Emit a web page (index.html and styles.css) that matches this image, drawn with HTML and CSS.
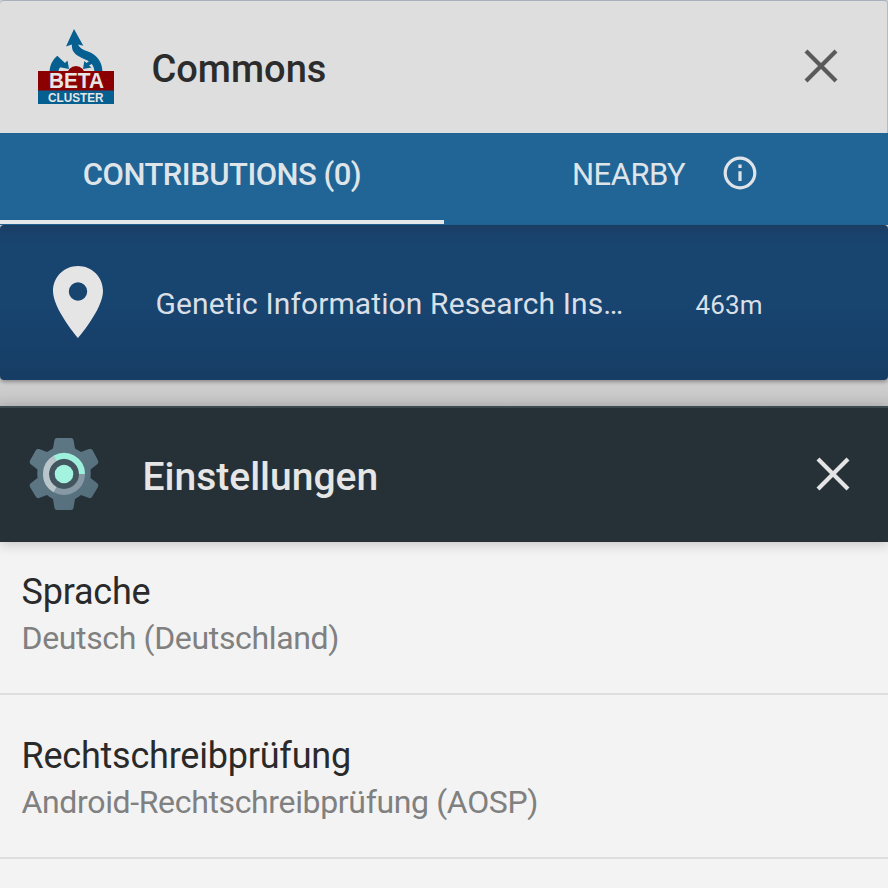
FILE: index.html
```
<!DOCTYPE html>
<html lang="de">
<head>
<meta charset="utf-8">
<title>Commons</title>
<link rel="stylesheet" href="styles.css">
</head>
<body>
<section class="task commons">
  <header class="task-header">
    <svg class="logo" viewBox="0 0 76 76">
      <g fill="#065f91">
        <path d="M36 0 45.300 16.700 40 15.500C41.500 19 45 21 50 22.500C60 26 64.300 34 64.500 43H56.500C56 37 54 34 49.500 31.500C40 27 33.500 25 33.800 15.500L28 17.500Z"/>
        <path d="M19.300 26.700 27 34 29.500 31.500 31 40 22 38.300 24 36.500C21.500 38.500 20.500 40 20.500 43H11.500C12 36 14 31.500 19.300 26.700Z"/>
        <path d="M45 40 46.300 32 48.500 34 52 31.500 54.500 34.500 51 36.500 53.500 38.600Z"/>
        <path d="M0 61H76V75H0Z"/>
      </g>
      <circle cx="38" cy="46" r="9" fill="#8b0000"/>
      <path d="M0 42H76V61.500H0Z" fill="#8b0000"/>
      <g class="logo-text" fill="#e6e6e6">
        <text x="38.500" y="59.300" font-size="22.500" textLength="55" lengthAdjust="spacingAndGlyphs">BETA</text>
        <text x="37.800" y="73" font-size="12.800" textLength="55.500" lengthAdjust="spacingAndGlyphs">CLUSTER</text>
      </g>
    </svg>
    <h1 class="task-title">Commons</h1>
    <svg class="close" viewBox="0 0 34 34"><path d="M2 2 32 32M32 2 2 32"/></svg>
  </header>
  <nav class="tabs">
    <div class="tab active"><span>CONTRIBUTIONS (0)</span></div>
    <div class="tab">
      <span>NEARBY</span>
      <svg class="info" viewBox="0 0 34 34"><circle cx="17" cy="17" r="14.800"/><path d="M17 15.300V25M17 8.500V12"/></svg>
    </div>
  </nav>
  <div class="place">
    <svg class="pin" viewBox="0 0 50 72"><path fill-rule="evenodd" d="M25 0C11 0 0 11 0 25C0 43 25 72 25 72S50 43 50 25C50 11 39 0 25 0ZM25 16.300A9.200 9.200 0 1 1 25 34.700A9.200 9.200 0 1 1 25 16.300Z"/></svg>
    <span class="place-name">Genetic Information Research Ins…</span>
    <span class="place-distance">463m</span>
  </div>
</section>
<section class="task settings">
  <header class="task-header">
    <svg class="gear" viewBox="0 0 70 74">
      <defs><linearGradient id="metal" x1="0" y1="0" x2="1" y2="1"><stop offset="0" stop-color="#617a88"/><stop offset="1" stop-color="#536d7b"/></linearGradient></defs>
      <path fill="url(#metal)" d="M28 1H42Q44 1 44.500 3L46 11.500Q49 13 52 15L60 12Q62.500 11.500 63.500 13L69 23.500Q70 25.500 68.500 27L61.500 32.500Q62 37 61.500 41L68.500 46.500Q70 48 69 50L63 60Q62 61.500 60 61L52 58Q49 60.500 46 62L44.500 71Q44 73 42 73H28Q26 73 25.500 71L24 62Q21 60.500 18 58L10 61Q8 61.500 7 60L1 50Q0 48 1.500 46.500L8.500 41Q8 37 8.500 32.500L1.500 27Q0 25.500 1 23.500L7 13Q8 11.500 10 12L18 15Q21 13 24 11.500L25.500 3Q26 1 28 1Z"/>
      <circle cx="35" cy="37" r="17" fill="#43565f"/>
      <g fill="none" stroke-width="6">
        <circle cx="35" cy="37" r="18" stroke="#8799a4"/>
        <path stroke="#b9c5cb" d="M26 52.600A18 18 0 0 1 26 21.400"/>
        <path stroke="#9cf0dc" d="M26 21.400A18 18 0 0 1 53 37"/>
      </g>
      <circle cx="35" cy="37" r="9.300" fill="#a4f3e1"/>
    </svg>
    <h1 class="task-title">Einstellungen</h1>
    <svg class="close" viewBox="0 0 34 34"><path d="M2 2 32 32M32 2 2 32"/></svg>
  </header>
  <ul class="prefs">
    <li class="pref"><div class="pref-title">Sprache</div><div class="pref-value">Deutsch (Deutschland)</div></li>
    <li class="pref"><div class="pref-title">Rechtschreibprüfung</div><div class="pref-value">Android-Rechtschreibprüfung (AOSP)</div></li>
  </ul>
</section>
</body>
</html>
```
FILE: styles.css
```
* { box-sizing: border-box; }
body {
  margin: 0;
  height: 888px;
  overflow: hidden;
  background: #f3f3f3;
  font-family: Roboto, "Liberation Sans", sans-serif;
}
svg { display: block; flex: none; }
.task-header { display: flex; align-items: center; }
.task-title { margin: 0; font-weight: 500; white-space: nowrap; }
.close { width: 34px; height: 34px; margin-left: auto; fill: none; stroke-width: 4.2; }

.commons { height: 406px; background: linear-gradient(#d2d2d2 380px, #c2c2c2); }
.commons .task-header {
  height: 133px;
  padding: 0 49px 2px 38px;
  background: #dedede;
  border-top: 1px solid #a7b2bd;
  border-right: 1px solid #b2bcc4;
  border-radius: 4px 4px 0 0;
}
.commons .task-title { margin-left: 37.5px; padding-top: 6px; font-size: 38px; color: #2c2c2c; }
.commons .close { stroke: #5a5a5a; }
.logo { width: 76px; height: 76px; margin-top: 2px; }
.logo-text { font-family: "Liberation Sans", sans-serif; font-weight: 700; text-anchor: middle; }

.tabs { display: flex; height: 92px; padding-bottom: 1px; background: #216597; }
.tab {
  flex: none;
  width: 50%;
  display: flex;
  justify-content: center;
  align-items: center;
  padding-bottom: 6px;
  border-bottom: 4px solid transparent;
  font-size: 31px;
  letter-spacing: -.5px;
  color: #dfe4e8;
  white-space: nowrap;
}
.tab span { padding-top: 2px; }
.tab.active { border-color: #e4e6e8; font-weight: 500; }
.tab:not(.active) { justify-content: flex-start; padding-left: 128px; }
.info { width: 34px; height: 34px; margin: -1px 0 0 37.5px; fill: none; stroke: #dfe4e8; stroke-width: 3.2; }

.place {
  display: flex;
  align-items: center;
  height: 155px;
  padding: 0 0 2px 53px;
  border-radius: 4px;
  background: linear-gradient(#1b3c60, #19416b 8px, #184470 20px, #184470 80px, #163d64);
  box-shadow: 0 2px 4px rgba(0, 0, 0, .35);
  color: #d9dfe6;
  white-space: nowrap;
}
.pin { width: 50px; height: 72px; fill: #e5e5e5; }
.place-name { width: 540px; margin-left: 52.5px; padding-top: 3px; font-size: 30px; letter-spacing: .11px; }
.place-distance { padding-top: 6px; font-size: 26px; letter-spacing: .15px; }

.settings .task-header {
  position: relative;
  height: 136px;
  padding: 0 38px 2px 29px;
  background: #263137;
  border-top: 2px solid #3d4a50;
  box-shadow: 0 2px 12px rgba(0, 0, 0, .2);
}
.gear { width: 70px; height: 74px; }
.settings .task-title { margin-left: 43.5px; padding-top: 5px; font-size: 39px; color: #e6e6e6; }
.settings .close { stroke: #e4e4e4; }

.prefs { margin: 0; padding: 0; list-style: none; }
.pref { height: 164px; padding: 38px 21.5px 0; border-bottom: 2px solid #dedede; line-height: 46px; white-space: nowrap; }
.pref:first-child { height: 153px; padding-top: 27px; }
.pref-title { font-size: 36px; letter-spacing: -.22px; color: #2a2a2a; }
.pref-value { font-size: 32px; letter-spacing: -.35px; color: #808080; }
```
